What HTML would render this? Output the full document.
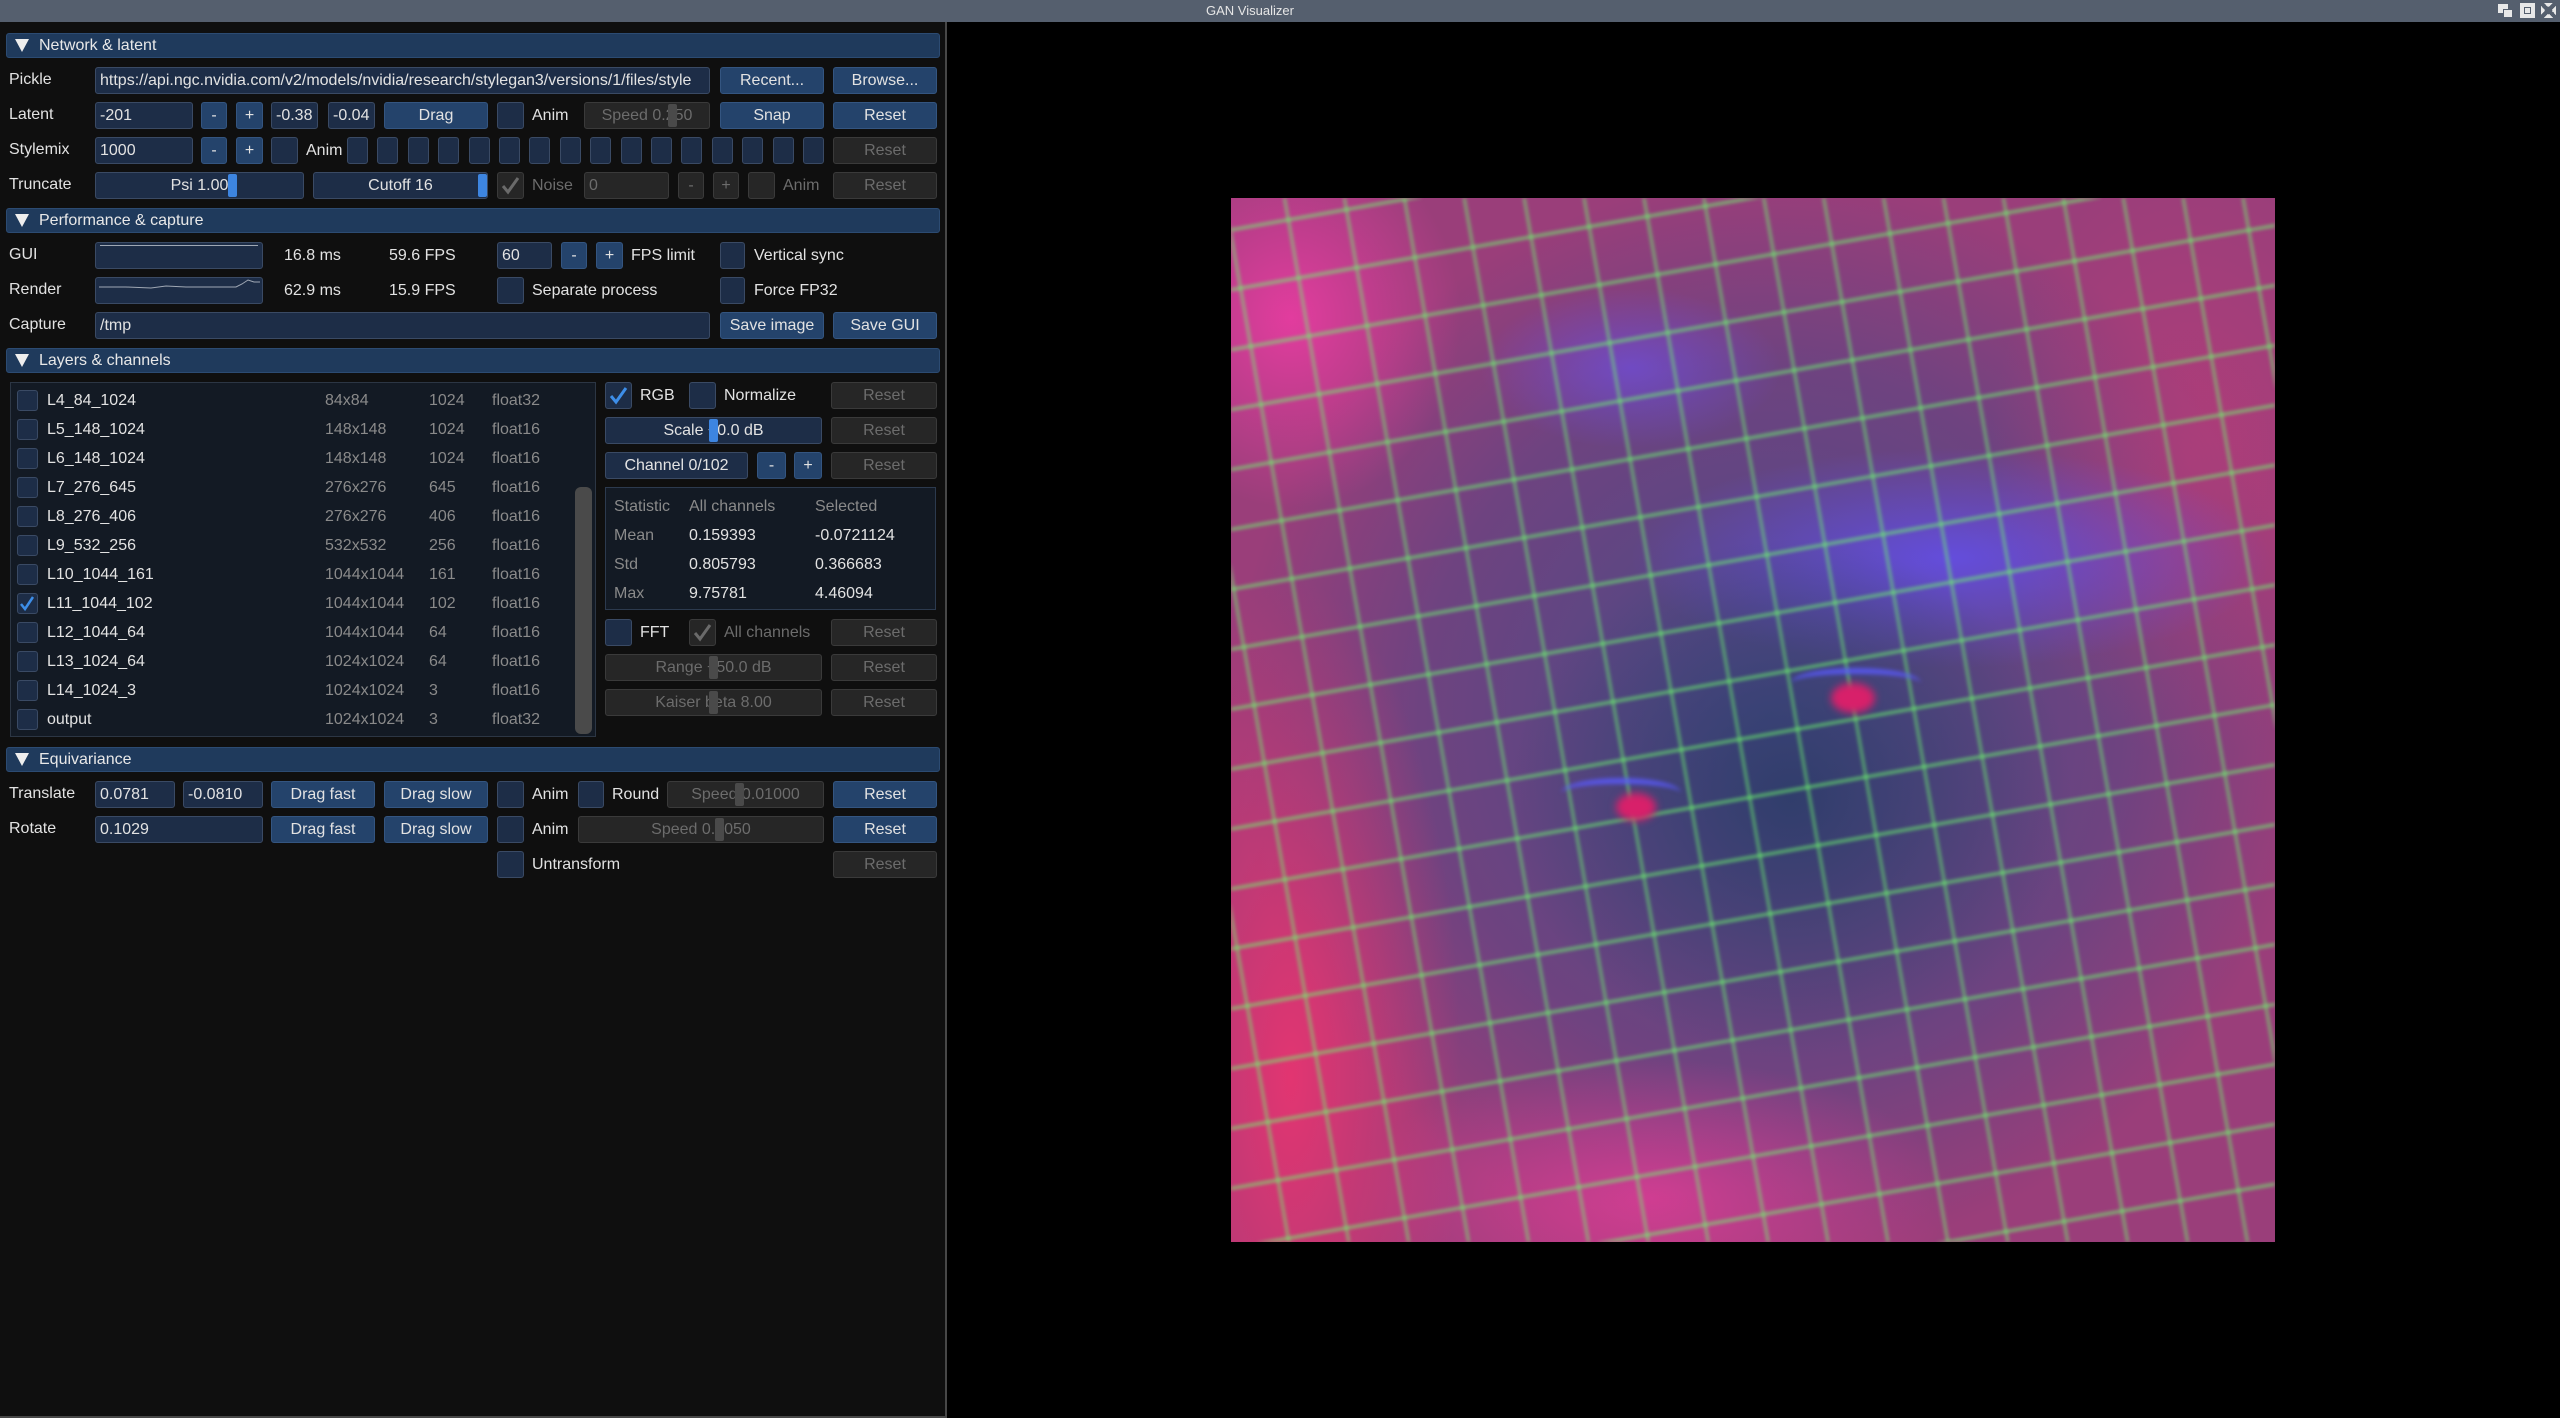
<!DOCTYPE html>
<html><head><meta charset="utf-8"><style>
*{margin:0;padding:0;box-sizing:border-box}
html{overflow:hidden;width:2560px;height:1418px}
body{width:2560px;height:1418px;background:#000;position:relative;overflow:hidden;font-family:"Liberation Sans","DejaVu Sans",sans-serif;font-size:16px;color:#e2e2e2}
.a{position:absolute}
#title{left:0;top:0;width:2560px;height:22px;background:#555f6e;color:#e6e6e6;font-size:13px;line-height:22px}
#panel{left:0;top:22px;width:947px;height:1396px;background:#0f0f0f;border-right:2px solid #474747;border-bottom:2px solid #474747}
#w{position:absolute;left:0;top:2px;width:947px;height:1000px}
.h{position:absolute;left:6px;width:934px;height:25px;background:#1f3a5c;border:1px solid #2c4b72;border-radius:3px;line-height:23px;padding-left:32px;color:#e8e8e8}
.h:before{content:"";position:absolute;left:8px;top:5px;border-left:7px solid transparent;border-right:7px solid transparent;border-top:13px solid #eee}
.f,.b,.d,.c,.cd{position:absolute;height:27px;border:1px solid #3a4a64;border-radius:3px;background:#1d2d47;line-height:25px;white-space:nowrap;overflow:hidden;color:#e2e2e2}
.f{padding-left:4px}
.b{background:#24436b;border-color:#345580;text-align:center}
.d{background:#262626;border-color:#3a3a3a;color:#6c6c6c;text-align:center}
.cc{text-align:center}
.c{width:27px}
.cd{width:27px;background:#262626;border-color:#3a3a3a}
.t{position:absolute;line-height:27px;white-space:nowrap}
.g{position:absolute;top:1px;width:9px;height:23px;background:#3d85e0;border-radius:2px}
.gd{background:#4a4a4a}
.sm{width:21px;height:27px}
.lc{position:absolute;left:17px;width:21px;height:21px;background:#1d2d47;border:1px solid #3a4a64;border-radius:3px}
.ln{position:absolute;left:47px;line-height:22px}
.lg{position:absolute;line-height:22px;color:#8a8a8a}
.st{position:absolute;line-height:22px}
</style></head><body>
<div id="title" class="a"><span class="a" style="left:1206px">GAN Visualizer</span>
<div class="a" style="left:2498px;top:4px;width:10px;height:9px;background:#e8e8e8"></div>
<div class="a" style="left:2503px;top:9px;width:10px;height:9px;background:#e8e8e8;border:1px solid #555f6e"></div>
<div class="a" style="left:2520px;top:3px;width:15px;height:15px;background:#e8e8e8"></div>
<div class="a" style="left:2524px;top:7px;width:7px;height:7px;border:1px solid #555f6e"></div>
<div class="a" style="left:2541px;top:3px;width:15px;height:15px;background:radial-gradient(circle,#555f6e 35%,transparent 36%),linear-gradient(45deg,transparent 40%,#555f6e 40%,#555f6e 60%,transparent 60%),linear-gradient(-45deg,#e8e8e8 40%,#555f6e 40%,#555f6e 60%,#e8e8e8 60%)"></div>
</div>

<div id="panel" class="a"></div>
<div id="w">
<div class="h" style="top:31px">Network &amp; latent</div>
<div class="t" style="left:9px;top:64px">Pickle</div>
<div class="f" style="left:95px;top:65px;width:615px">https://api.ngc.nvidia.com/v2/models/nvidia/research/stylegan3/versions/1/files/style</div>
<div class="b" style="left:720px;top:65px;width:104px">Recent...</div>
<div class="b" style="left:833px;top:65px;width:104px">Browse...</div>

<div class="t" style="left:9px;top:99px">Latent</div>
<div class="f" style="left:95px;top:100px;width:98px">-201</div>
<div class="b" style="left:201px;top:100px;width:26px">-</div>
<div class="b" style="left:236px;top:100px;width:27px">+</div>
<div class="f" style="left:271px;top:100px;width:47px">-0.38</div>
<div class="f" style="left:328px;top:100px;width:47px">-0.04</div>
<div class="b" style="left:384px;top:100px;width:104px">Drag</div>
<div class="c" style="left:497px;top:100px"></div>
<div class="t" style="left:532px;top:100px">Anim</div>
<div class="d" style="left:584px;top:100px;width:126px">Speed 0.250<div class="g gd" style="left:83px"></div></div>
<div class="b" style="left:720px;top:100px;width:104px">Snap</div>
<div class="b" style="left:833px;top:100px;width:104px">Reset</div>

<div class="t" style="left:9px;top:134px">Stylemix</div>
<div class="f" style="left:95px;top:135px;width:98px">1000</div>
<div class="b" style="left:201px;top:135px;width:26px">-</div>
<div class="b" style="left:236px;top:135px;width:27px">+</div>
<div class="c" style="left:271px;top:135px"></div>
<div class="t" style="left:306px;top:135px">Anim</div>
<div class="c sm" style="left:347px;top:135px"></div>
<div class="c sm" style="left:377px;top:135px"></div>
<div class="c sm" style="left:408px;top:135px"></div>
<div class="c sm" style="left:438px;top:135px"></div>
<div class="c sm" style="left:469px;top:135px"></div>
<div class="c sm" style="left:499px;top:135px"></div>
<div class="c sm" style="left:529px;top:135px"></div>
<div class="c sm" style="left:560px;top:135px"></div>
<div class="c sm" style="left:590px;top:135px"></div>
<div class="c sm" style="left:621px;top:135px"></div>
<div class="c sm" style="left:651px;top:135px"></div>
<div class="c sm" style="left:681px;top:135px"></div>
<div class="c sm" style="left:712px;top:135px"></div>
<div class="c sm" style="left:742px;top:135px"></div>
<div class="c sm" style="left:773px;top:135px"></div>
<div class="c sm" style="left:803px;top:135px"></div>
<div class="d" style="left:833px;top:135px;width:104px">Reset</div>

<div class="t" style="left:9px;top:169px">Truncate</div>
<div class="f cc" style="left:95px;top:170px;width:209px;padding:0">Psi 1.00<div class="g" style="left:132px"></div></div>
<div class="f cc" style="left:313px;top:170px;width:175px;padding:0">Cutoff 16<div class="g" style="left:164px"></div></div>
<div class="cd" style="left:497px;top:170px"><svg width="25" height="25" class="a"><polyline points="5,13 10,19 20,5" fill="none" stroke="#6a6a6a" stroke-width="3"/></svg></div>
<div class="t" style="left:532px;top:170px;color:#6c6c6c">Noise</div>
<div class="d" style="left:584px;top:170px;width:85px;text-align:left;padding-left:4px">0</div>
<div class="d" style="left:678px;top:170px;width:26px">-</div>
<div class="d" style="left:713px;top:170px;width:26px">+</div>
<div class="cd" style="left:748px;top:170px"></div>
<div class="t" style="left:783px;top:170px;color:#6c6c6c">Anim</div>
<div class="d" style="left:833px;top:170px;width:104px">Reset</div>

<div class="h" style="top:206px">Performance &amp; capture</div>
<div class="t" style="left:9px;top:239px">GUI</div>
<div class="f" style="left:95px;top:240px;width:168px"><div class="a" style="left:4px;top:2px;width:158px;height:1px;background:#a0a8b4"></div></div>
<div class="t" style="left:284px;top:240px">16.8 ms</div>
<div class="t" style="left:389px;top:240px">59.6 FPS</div>
<div class="f" style="left:497px;top:240px;width:55px">60</div>
<div class="b" style="left:561px;top:240px;width:26px">-</div>
<div class="b" style="left:596px;top:240px;width:27px">+</div>
<div class="t" style="left:631px;top:240px">FPS limit</div>
<div class="c" style="left:720px;top:240px;width:25px"></div>
<div class="t" style="left:754px;top:240px">Vertical sync</div>

<div class="t" style="left:9px;top:274px">Render</div>
<div class="f" style="left:95px;top:275px;width:168px;padding:0"><svg class="a" width="166" height="25"><polyline points="3,9 30,9 55,10 70,8 90,9 140,9 146,6 152,2 158,4 164,4" fill="none" stroke="#a0a8b4" stroke-width="1"/></svg></div>
<div class="t" style="left:284px;top:275px">62.9 ms</div>
<div class="t" style="left:389px;top:275px">15.9 FPS</div>
<div class="c" style="left:497px;top:275px"></div>
<div class="t" style="left:532px;top:275px">Separate process</div>
<div class="c" style="left:720px;top:275px;width:25px"></div>
<div class="t" style="left:754px;top:275px">Force FP32</div>

<div class="t" style="left:9px;top:309px">Capture</div>
<div class="f" style="left:95px;top:310px;width:615px">/tmp</div>
<div class="b" style="left:720px;top:310px;width:104px">Save image</div>
<div class="b" style="left:833px;top:310px;width:104px">Save GUI</div>

<div class="h" style="top:346px">Layers &amp; channels</div>
<div class="a" style="left:10px;top:380px;width:586px;height:355px;background:#131a24;border:1px solid #2c3644"></div>
<div class="a" style="left:575px;top:485px;width:17px;height:247px;background:#4a4a4a;border-radius:6px"></div>

<div class="lc" style="top:388px"></div><div class="ln" style="top:388px">L4_84_1024</div><div class="lg" style="left:325px;top:388px">84x84</div><div class="lg" style="left:429px;top:388px">1024</div><div class="lg" style="left:492px;top:388px">float32</div>
<div class="lc" style="top:417px"></div><div class="ln" style="top:417px">L5_148_1024</div><div class="lg" style="left:325px;top:417px">148x148</div><div class="lg" style="left:429px;top:417px">1024</div><div class="lg" style="left:492px;top:417px">float16</div>
<div class="lc" style="top:446px"></div><div class="ln" style="top:446px">L6_148_1024</div><div class="lg" style="left:325px;top:446px">148x148</div><div class="lg" style="left:429px;top:446px">1024</div><div class="lg" style="left:492px;top:446px">float16</div>
<div class="lc" style="top:475px"></div><div class="ln" style="top:475px">L7_276_645</div><div class="lg" style="left:325px;top:475px">276x276</div><div class="lg" style="left:429px;top:475px">645</div><div class="lg" style="left:492px;top:475px">float16</div>
<div class="lc" style="top:504px"></div><div class="ln" style="top:504px">L8_276_406</div><div class="lg" style="left:325px;top:504px">276x276</div><div class="lg" style="left:429px;top:504px">406</div><div class="lg" style="left:492px;top:504px">float16</div>
<div class="lc" style="top:533px"></div><div class="ln" style="top:533px">L9_532_256</div><div class="lg" style="left:325px;top:533px">532x532</div><div class="lg" style="left:429px;top:533px">256</div><div class="lg" style="left:492px;top:533px">float16</div>
<div class="lc" style="top:562px"></div><div class="ln" style="top:562px">L10_1044_161</div><div class="lg" style="left:325px;top:562px">1044x1044</div><div class="lg" style="left:429px;top:562px">161</div><div class="lg" style="left:492px;top:562px">float16</div>
<div class="lc" style="top:591px"><svg width="19" height="19" class="a"><polyline points="3,10 7,15 15,3" fill="none" stroke="#3d8ee8" stroke-width="2.5"/></svg></div><div class="ln" style="top:591px">L11_1044_102</div><div class="lg" style="left:325px;top:591px">1044x1044</div><div class="lg" style="left:429px;top:591px">102</div><div class="lg" style="left:492px;top:591px">float16</div>
<div class="lc" style="top:620px"></div><div class="ln" style="top:620px">L12_1044_64</div><div class="lg" style="left:325px;top:620px">1044x1044</div><div class="lg" style="left:429px;top:620px">64</div><div class="lg" style="left:492px;top:620px">float16</div>
<div class="lc" style="top:649px"></div><div class="ln" style="top:649px">L13_1024_64</div><div class="lg" style="left:325px;top:649px">1024x1024</div><div class="lg" style="left:429px;top:649px">64</div><div class="lg" style="left:492px;top:649px">float16</div>
<div class="lc" style="top:678px"></div><div class="ln" style="top:678px">L14_1024_3</div><div class="lg" style="left:325px;top:678px">1024x1024</div><div class="lg" style="left:429px;top:678px">3</div><div class="lg" style="left:492px;top:678px">float16</div>
<div class="lc" style="top:707px"></div><div class="ln" style="top:707px">output</div><div class="lg" style="left:325px;top:707px">1024x1024</div><div class="lg" style="left:429px;top:707px">3</div><div class="lg" style="left:492px;top:707px">float32</div>

<div class="c" style="left:605px;top:380px"><svg width="25" height="25" class="a"><polyline points="5,13 10,19 20,5" fill="none" stroke="#3d8ee8" stroke-width="3"/></svg></div>
<div class="t" style="left:640px;top:380px">RGB</div>
<div class="c" style="left:689px;top:380px"></div>
<div class="t" style="left:724px;top:380px">Normalize</div>
<div class="d" style="left:831px;top:380px;width:106px">Reset</div>
<div class="f cc" style="left:605px;top:415px;width:217px;padding:0">Scale +0.0 dB<div class="g" style="left:103px"></div></div>
<div class="d" style="left:831px;top:415px;width:106px">Reset</div>
<div class="f cc" style="left:605px;top:450px;width:143px;padding:0">Channel 0/102</div>
<div class="b" style="left:757px;top:450px;width:29px">-</div>
<div class="b" style="left:794px;top:450px;width:28px">+</div>
<div class="d" style="left:831px;top:450px;width:106px">Reset</div>
<div class="a" style="left:605px;top:485px;width:331px;height:123px;background:#131a24;border:1px solid #2c3a4e"></div>
<div class="st" style="left:614px;top:494px;color:#8a8a8a">Statistic</div><div class="st" style="left:689px;top:494px;color:#8a8a8a">All channels</div><div class="st" style="left:815px;top:494px;color:#8a8a8a">Selected</div>
<div class="st" style="left:614px;top:523px;color:#8a8a8a">Mean</div><div class="st" style="left:689px;top:523px">0.159393</div><div class="st" style="left:815px;top:523px">-0.0721124</div>
<div class="st" style="left:614px;top:552px;color:#8a8a8a">Std</div><div class="st" style="left:689px;top:552px">0.805793</div><div class="st" style="left:815px;top:552px">0.366683</div>
<div class="st" style="left:614px;top:581px;color:#8a8a8a">Max</div><div class="st" style="left:689px;top:581px">9.75781</div><div class="st" style="left:815px;top:581px">4.46094</div>
<div class="c" style="left:605px;top:617px"></div>
<div class="t" style="left:640px;top:617px">FFT</div>
<div class="cd" style="left:689px;top:617px"><svg width="25" height="25" class="a"><polyline points="5,13 10,19 20,5" fill="none" stroke="#6a6a6a" stroke-width="3"/></svg></div>
<div class="t" style="left:724px;top:617px;color:#6c6c6c">All channels</div>
<div class="d" style="left:831px;top:617px;width:106px">Reset</div>
<div class="d" style="left:605px;top:652px;width:217px">Range +50.0 dB<div class="g gd" style="left:103px"></div></div>
<div class="d" style="left:831px;top:652px;width:106px">Reset</div>
<div class="d" style="left:605px;top:687px;width:217px">Kaiser beta 8.00<div class="g gd" style="left:103px"></div></div>
<div class="d" style="left:831px;top:687px;width:106px">Reset</div>

<div class="h" style="top:745px">Equivariance</div>
<div class="t" style="left:9px;top:778px">Translate</div>
<div class="f" style="left:95px;top:779px;width:80px">0.0781</div>
<div class="f" style="left:183px;top:779px;width:80px">-0.0810</div>
<div class="b" style="left:271px;top:779px;width:104px">Drag fast</div>
<div class="b" style="left:384px;top:779px;width:104px">Drag slow</div>
<div class="c" style="left:497px;top:779px"></div>
<div class="t" style="left:532px;top:779px">Anim</div>
<div class="c" style="left:578px;top:779px;width:26px"></div>
<div class="t" style="left:612px;top:779px">Round</div>
<div class="d" style="left:667px;top:779px;width:157px">Speed 0.01000<div class="g gd" style="left:67px"></div></div>
<div class="b" style="left:833px;top:779px;width:104px">Reset</div>

<div class="t" style="left:9px;top:813px">Rotate</div>
<div class="f" style="left:95px;top:814px;width:168px">0.1029</div>
<div class="b" style="left:271px;top:814px;width:104px">Drag fast</div>
<div class="b" style="left:384px;top:814px;width:104px">Drag slow</div>
<div class="c" style="left:497px;top:814px"></div>
<div class="t" style="left:532px;top:814px">Anim</div>
<div class="d" style="left:578px;top:814px;width:246px">Speed 0.0050<div class="g gd" style="left:136px"></div></div>
<div class="b" style="left:833px;top:814px;width:104px">Reset</div>

<div class="c" style="left:497px;top:849px"></div>
<div class="t" style="left:532px;top:849px">Untransform</div>
<div class="d" style="left:833px;top:849px;width:104px">Reset</div>
</div>

<div class="a" style="left:1231px;top:198px;width:1044px;height:1044px;overflow:hidden;background:
radial-gradient(ellipse 280px 260px at 560px 600px,rgba(45,60,105,0.9),transparent),
radial-gradient(ellipse 320px 110px at 720px 360px,rgba(100,80,250,0.75),transparent),
radial-gradient(ellipse 150px 80px at 400px 170px,rgba(110,80,240,0.6),transparent),
radial-gradient(ellipse 170px 500px at 60px 880px,rgba(250,50,110,0.75),transparent),
radial-gradient(ellipse 170px 190px at 60px 120px,rgba(250,60,170,0.75),transparent),
radial-gradient(ellipse 300px 140px at 420px 1000px,rgba(250,60,160,0.6),transparent),
radial-gradient(ellipse 200px 300px at 960px 260px,rgba(200,60,120,0.45),transparent),
radial-gradient(ellipse 540px 540px at 540px 520px,#4a4a86,#6e4380 65%,#9a3e7a)">
<div class="a" style="left:0;top:0;width:1044px;height:1044px;filter:blur(1.5px);background:
repeating-linear-gradient(-10deg,transparent 0,transparent 55px,rgba(110,250,110,0.5) 55px,rgba(110,250,110,0.5) 59px),
repeating-linear-gradient(80deg,transparent 0,transparent 55px,rgba(110,250,110,0.42) 55px,rgba(110,250,110,0.42) 59px)"></div>
<div class="a" style="left:600px;top:485px;width:44px;height:30px;border-radius:50%;background:#d8206a;filter:blur(4px)"></div>
<div class="a" style="left:385px;top:595px;width:40px;height:28px;border-radius:50%;background:#d8206a;filter:blur(4px)"></div>
<div class="a" style="left:560px;top:470px;width:130px;height:30px;border-top:6px solid rgba(90,90,255,0.8);border-radius:50%;filter:blur(2px)"></div>
<div class="a" style="left:330px;top:580px;width:120px;height:30px;border-top:6px solid rgba(90,90,255,0.8);border-radius:50%;filter:blur(2px)"></div>
</div>
</body></html>
